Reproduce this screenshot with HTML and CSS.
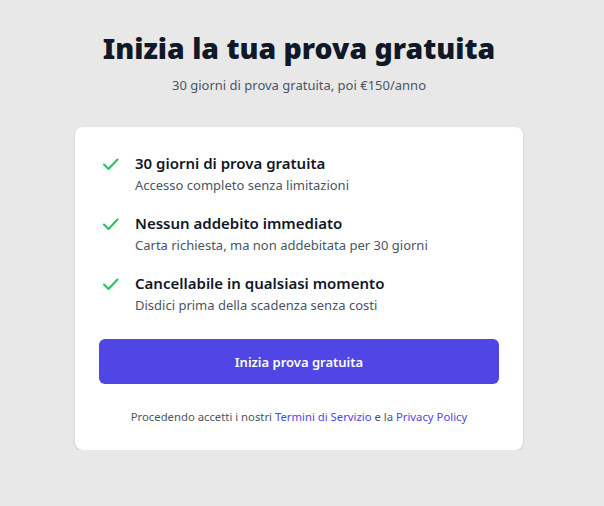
FILE: index.html
```html
<!DOCTYPE html>
<html lang="it">
<head>
<meta charset="utf-8">
<link rel="stylesheet" href="styles.css">
</head>
<body>
<main class="page">
  <header class="hero">
    <h1 class="title">Inizia la tua prova gratuita</h1>
    <p class="subtitle">30 giorni di prova gratuita, poi €150/anno</p>
  </header>
  <section class="card">
    <ul class="features">
      <li class="feature">
        <svg class="check" viewBox="0 0 20 20" width="20" height="20"><path d="M3 10.5l4.5 4.5 9-9.5" fill="none" stroke="#22c55e" stroke-width="2" stroke-linecap="round" stroke-linejoin="round"/></svg>
        <div class="feature-text">
          <div class="feature-title">30 giorni di prova gratuita</div>
          <div class="feature-desc">Accesso completo senza limitazioni</div>
        </div>
      </li>
      <li class="feature">
        <svg class="check" viewBox="0 0 20 20" width="20" height="20"><path d="M3 10.5l4.5 4.5 9-9.5" fill="none" stroke="#22c55e" stroke-width="2" stroke-linecap="round" stroke-linejoin="round"/></svg>
        <div class="feature-text">
          <div class="feature-title">Nessun addebito immediato</div>
          <div class="feature-desc">Carta richiesta, ma non addebitata per 30 giorni</div>
        </div>
      </li>
      <li class="feature">
        <svg class="check" viewBox="0 0 20 20" width="20" height="20"><path d="M3 10.5l4.5 4.5 9-9.5" fill="none" stroke="#22c55e" stroke-width="2" stroke-linecap="round" stroke-linejoin="round"/></svg>
        <div class="feature-text">
          <div class="feature-title">Cancellabile in qualsiasi momento</div>
          <div class="feature-desc">Disdici prima della scadenza senza costi</div>
        </div>
      </li>
    </ul>
    <button class="cta">Inizia prova gratuita</button>
    <p class="terms">Procedendo accetti i nostri <a href="#">Termini di Servizio</a> e la <a href="#">Privacy Policy</a></p>
  </section>
</main>
</body>
</html>
```
FILE: styles.css
```css
* { box-sizing: border-box; }
html, body { margin: 0; padding: 0; }
body {
  background: #e8e8e8;
  font-family: "Noto Sans", "Open Sans", sans-serif;
  color: #111827;
}
.page {
  display: flex;
  flex-direction: column;
  align-items: center;
  padding: 27px 6px 0 0;
}
.hero { text-align: center; }
.title {
  margin: 0;
  font-size: 28.4px;
  line-height: 42px;
  font-weight: 900;
  color: #111827;
}
.subtitle {
  margin: 6px 0 0;
  font-size: 13px;
  line-height: 20px;
  color: #4b5563;
}
.card {
  margin-top: 32px;
  width: 448px;
  background: #fff;
  border-radius: 8px;
  box-shadow: 0 1px 3px rgba(0,0,0,0.1), 0 1px 2px rgba(0,0,0,0.06);
  padding: 24px;
}
.features {
  list-style: none;
  margin: 0;
  padding: 0;
  display: flex;
  flex-direction: column;
  gap: 16px;
}
.feature {
  display: flex;
  gap: 14px;
  padding-left: 2px;
}
.check { flex: none; margin-top: 3px; }
.feature-title {
  font-size: 15px;
  line-height: 24px;
  font-weight: 600;
  color: #111827;
}
.feature-desc {
  font-size: 13px;
  line-height: 20px;
  color: #4b5563;
}
.cta {
  display: block;
  width: 100%;
  margin-top: 24px;
  height: 45px;
  border: none;
  border-radius: 6px;
  background: #4f46e5;
  color: #fff;
  font-family: inherit;
  font-size: 13px;
  font-weight: 600;
}
.terms {
  margin: 24px 0 0;
  text-align: center;
  font-size: 11.3px;
  line-height: 18px;
  color: #4b5563;
}
.terms a { color: #4f46e5; text-decoration: none; }
```
